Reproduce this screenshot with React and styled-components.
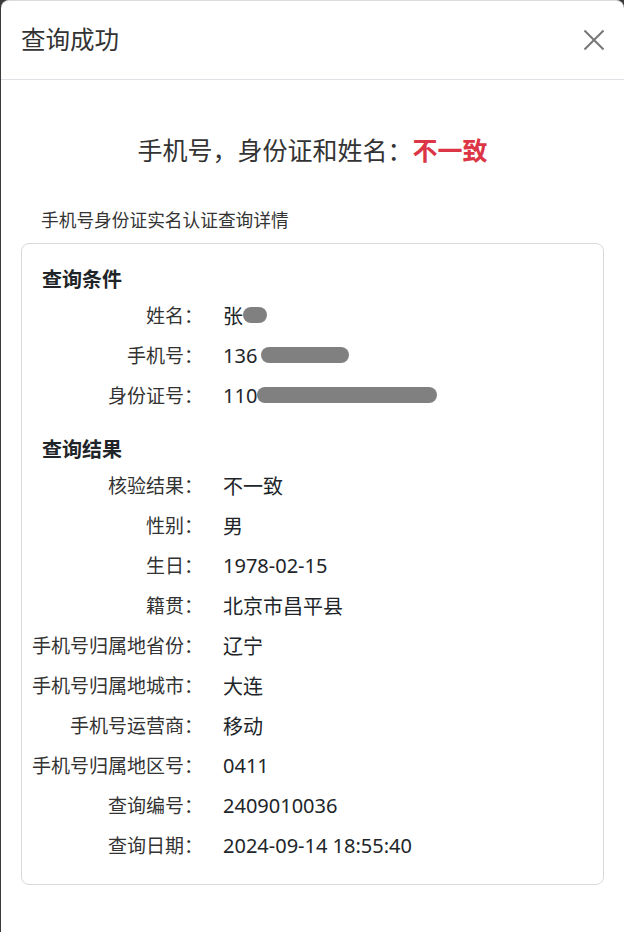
import React from "react"
import styled, { createGlobalStyle } from "styled-components"

const GlobalStyle = createGlobalStyle`
  html, body {
    margin: 0;
    padding: 0;
    background: #3a3a3a;
  }
  body {
    font-family: "Noto Sans", "Noto Sans CJK SC", sans-serif;
    color: #212529;
  }
`

const Modal = styled.div`
  margin: 0 0 0 1px;
  min-height: 932px;
  box-sizing: border-box;
  background: #fff;
  border-top: 1px solid #dcdcdc;
  border-radius: 8px 8px 0 0;
  display: flex;
  flex-direction: column;
`

const Header = styled.header`
  height: 78px;
  padding: 0 20px;
  display: flex;
  align-items: center;
  justify-content: space-between;
  border-bottom: 1px solid #dee2e6;
`

const Title = styled.h5`
  margin: 0;
  font-size: 24.5px;
  font-weight: 400;
  color: #333;
  line-height: 1;
`

const CloseButton = styled.button`
  width: 20px;
  height: 20px;
  padding: 0;
  border: 0;
  background: none;
  color: #777;
  display: flex;
  align-items: center;
  justify-content: center;
`

const Body = styled.div`
  padding: 52px 20px 40px;
`

const Headline = styled.h3`
  margin: 0;
  text-align: center;
  font-size: 25px;
  font-weight: 400;
  line-height: 36px;
  color: #333;
`

const Mismatch = styled.strong`
  color: #dc3545;
  font-weight: 700;
`

const Subtitle = styled.p`
  margin: 40px 0 11px;
  padding-left: 20px;
  font-size: 17.7px;
  line-height: 24px;
  color: #333;
`

const Card = styled.section`
  border: 1px solid #d9d9d9;
  border-radius: 8px;
  padding: 21px 0 19px;
`

const SectionTitle = styled.h6`
  margin: ${({ $first }) => ($first ? "0" : "20px 0 0")};
  padding-left: 20px;
  height: 30px;
  line-height: 30px;
  font-size: 20px;
  font-weight: 700;
  color: #212529;
`

const Grid = styled.dl`
  margin: 0;
  display: grid;
  grid-template-columns: 181px 1fr;
  column-gap: 20px;
  grid-auto-rows: 40px;
  align-items: center;
`

const Label = styled.dt`
  text-align: right;
  white-space: nowrap;
  font-size: 19px;
  color: #333;
`

const Value = styled.dd`
  margin: 0;
  white-space: nowrap;
  font-size: 20px;
  color: #212529;
  display: flex;
  align-items: center;
`

const Blur = styled.span`
  display: inline-block;
  width: ${({ $w }) => $w}px;
  height: 16px;
  margin-left: ${({ $shift }) => $shift || 0}px;
  border-radius: 8px;
  background: #808080;
`

const conditions = [
  { label: "姓名：", value: "张", blur: 24, shift: 0 },
  { label: "手机号：", value: "136", blur: 88, shift: 4 },
  { label: "身份证号：", value: "110", blur: 180, shift: 0 },
]

const results = [
  ["核验结果：", "不一致"],
  ["性别：", "男"],
  ["生日：", "1978-02-15"],
  ["籍贯：", "北京市昌平县"],
  ["手机号归属地省份：", "辽宁"],
  ["手机号归属地城市：", "大连"],
  ["手机号运营商：", "移动"],
  ["手机号归属地区号：", "0411"],
  ["查询编号：", "2409010036"],
  ["查询日期：", "2024-09-14 18:55:40"],
]

export default function App() {
  return (
    <>
      <GlobalStyle />
      <Modal>
        <Header>
          <Title>查询成功</Title>
          <CloseButton aria-label="关闭">
            <svg width="20" height="20" viewBox="0 0 20 20">
              <path
                d="M0.5 0.5 L19.5 19.5 M19.5 0.5 L0.5 19.5"
                stroke="currentColor"
                strokeWidth="2"
                fill="none"
              />
            </svg>
          </CloseButton>
        </Header>
        <Body>
          <Headline>
            手机号，身份证和姓名：<Mismatch>不一致</Mismatch>
          </Headline>
          <Subtitle>手机号身份证实名认证查询详情</Subtitle>
          <Card>
            <SectionTitle $first>查询条件</SectionTitle>
            <Grid>
              {conditions.map((c) => (
                <React.Fragment key={c.label}>
                  <Label>{c.label}</Label>
                  <Value>
                    {c.value}
                    <Blur $w={c.blur} $shift={c.shift} />
                  </Value>
                </React.Fragment>
              ))}
            </Grid>
            <SectionTitle>查询结果</SectionTitle>
            <Grid>
              {results.map(([label, value]) => (
                <React.Fragment key={label}>
                  <Label>{label}</Label>
                  <Value>{value}</Value>
                </React.Fragment>
              ))}
            </Grid>
          </Card>
        </Body>
      </Modal>
    </>
  )
}
